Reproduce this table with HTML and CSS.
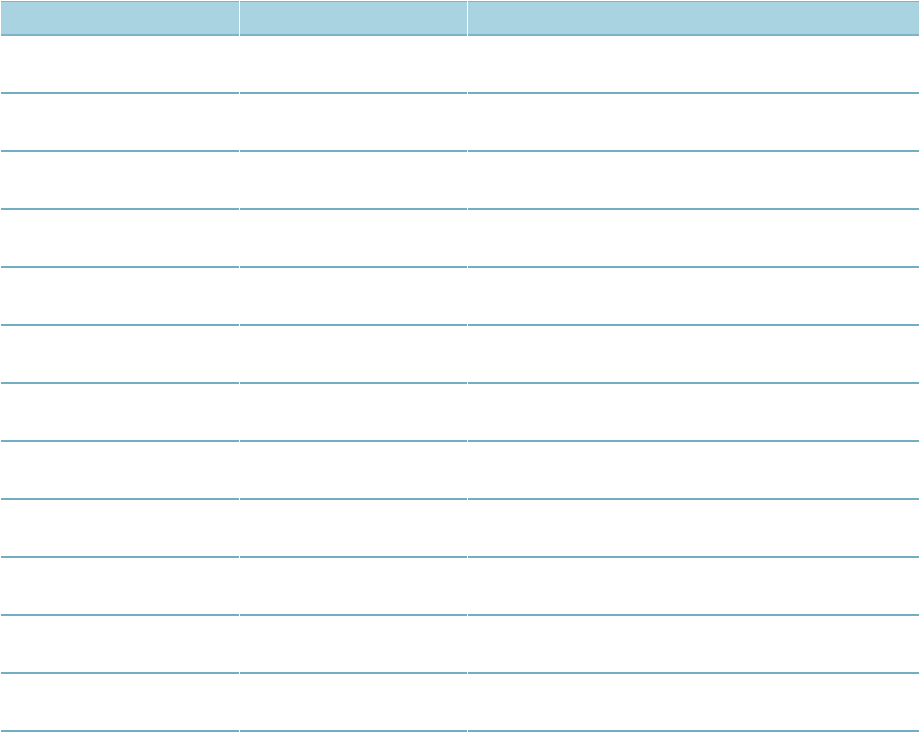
FILE: index.html
```html
<!DOCTYPE html>
<html lang="en">
<head>
<meta charset="utf-8">
<title>Table</title>
<link rel="stylesheet" href="styles.css">
</head>
<body>
<table class="grid">
  <colgroup>
    <col class="col-a">
    <col class="col-b">
    <col class="col-c">
  </colgroup>
  <thead>
    <tr><th></th><th></th><th></th></tr>
  </thead>
  <tbody>
    <tr><td></td><td></td><td></td></tr>
    <tr><td></td><td></td><td></td></tr>
    <tr><td></td><td></td><td></td></tr>
    <tr><td></td><td></td><td></td></tr>
    <tr><td></td><td></td><td></td></tr>
    <tr><td></td><td></td><td></td></tr>
    <tr><td></td><td></td><td></td></tr>
    <tr><td></td><td></td><td></td></tr>
    <tr><td></td><td></td><td></td></tr>
    <tr><td></td><td></td><td></td></tr>
    <tr><td></td><td></td><td></td></tr>
    <tr><td></td><td></td><td></td></tr>
  </tbody>
</table>
</body>
</html>
```
FILE: styles.css
```css
html, body {
  margin: 0;
  padding: 0;
  background: #ffffff;
  font-family: "Liberation Sans", Arial, sans-serif;
}

.grid {
  width: 920px;
  table-layout: fixed;
  border-collapse: separate;
  border-spacing: 1px 0;
  margin-top: 1px;
}

.col-a { width: 238px; }
.col-b { width: 227px; }
.col-c { width: 451px; }

.grid th {
  height: 32px;
  padding: 0;
  background: #a9d3e0;
  border-top: 1px solid #7db4c7;
  border-bottom: 2px solid #7db4c7;
  box-sizing: content-box;
}

.grid td {
  height: 56px;
  padding: 0;
  border-bottom: 2px solid #72aec2;
  box-sizing: content-box;
}
```
